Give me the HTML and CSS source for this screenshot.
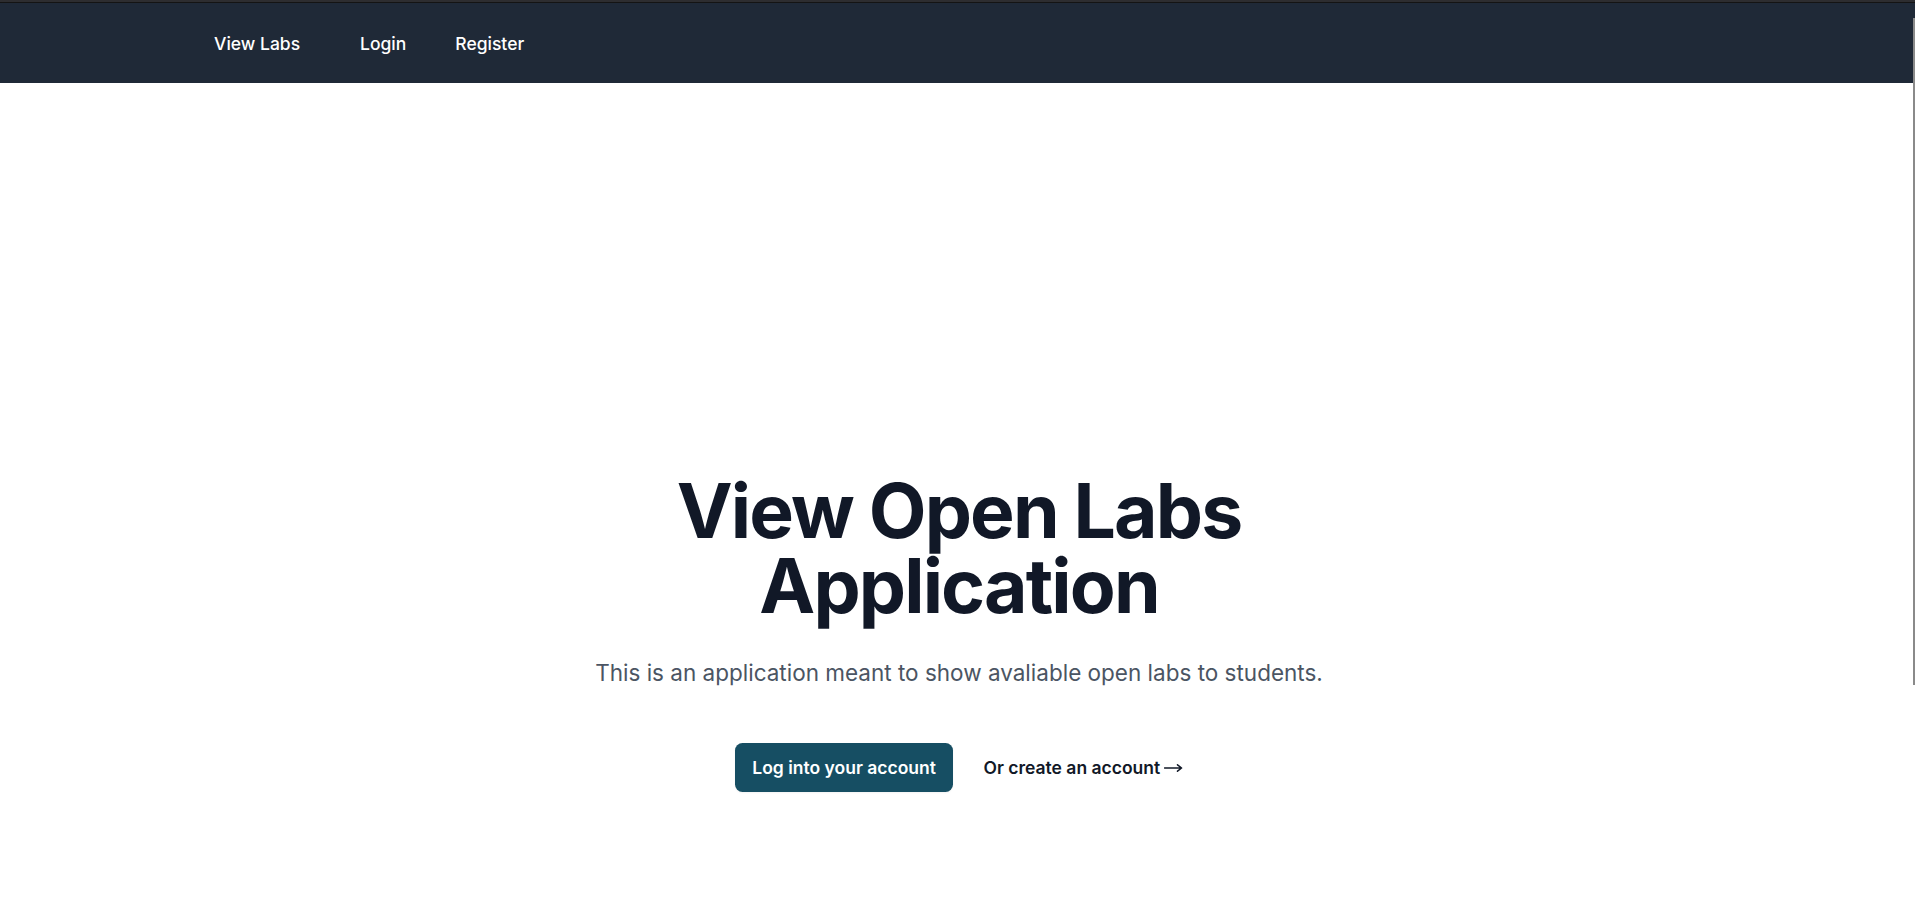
FILE: index.html
```html
<!DOCTYPE html>
<html lang="en">
<head>
<meta charset="utf-8">
<title>View Open Labs Application</title>
<link rel="stylesheet" href="styles.css">
</head>
<body>
<div class="top-strip"></div>
<header class="site-nav">
  <nav class="nav-inner">
    <a class="nav-link nav-link-first" href="#">View Labs</a>
    <a class="nav-link" href="#">Login</a>
    <a class="nav-link" href="#">Register</a>
  </nav>
</header>
<main class="hero">
  <div class="hero-inner">
    <h1 class="hero-title">View Open Labs Application</h1>
    <p class="hero-text">This is an application meant to show avaliable open labs to students.</p>
    <div class="hero-actions">
      <a class="btn-primary" href="#">Log into your account</a>
      <a class="btn-link" href="#">Or create an account<svg class="arrow" width="19" height="10" viewBox="0 0 19 10" aria-hidden="true"><path d="M0.5 5H17.5M13.5 1.8L17.6 5L13.5 8.2" fill="none" stroke="#111827" stroke-width="1.5" stroke-linecap="round" stroke-linejoin="round"/></svg></a>
    </div>
  </div>
</main>
<div class="scroll-thumb"></div>
</body>
</html>
```

FILE: styles.css
```css
html, body {
  margin: 0;
  padding: 0;
  background: #ffffff;
}

body {
  font-family: Inter, "Noto Sans", "Liberation Sans", sans-serif;
  -webkit-font-smoothing: antialiased;
  min-height: 915px;
}

a {
  text-decoration: none;
}

.top-strip {
  height: 2px;
  background: #2d2d30;
  border-bottom: 1px solid #141414;
}

.site-nav {
  background: #1f2937;
  height: 80px;
}

.nav-inner {
  height: 100%;
  display: flex;
  align-items: center;
  padding-left: 214px;
  gap: 49px;
}

.nav-link {
  color: #ffffff;
  font-size: 17.5px;
  font-weight: 500;
  line-height: 25px;
}

.nav-link-first {
  margin-right: 11px;
}

.hero {
  display: flex;
  justify-content: center;
  padding: 390px 0 0 3px;
}

.hero-inner {
  max-width: 840px;
  text-align: center;
}

.hero-title {
  margin: 0;
  font-size: 75px;
  line-height: 75px;
  font-weight: 700;
  letter-spacing: -1.875px;
  color: #111827;
}

.hero-text {
  margin: 30px 0 0;
  font-size: 22.5px;
  line-height: 40px;
  color: #4b5563;
}

.hero-actions {
  margin-top: 50px;
  display: flex;
  justify-content: center;
  align-items: center;
  gap: 30px;
}

.btn-primary {
  background: #164e63;
  color: #ffffff;
  border-radius: 7.5px;
  padding: 12.5px 17.5px;
  font-size: 17.5px;
  line-height: 24px;
  font-weight: 600;
  box-shadow: 0 1px 2px rgba(0, 0, 0, 0.05);
}

.btn-link {
  display: inline-flex;
  align-items: center;
  gap: 4px;
  color: #111827;
  font-size: 17.5px;
  line-height: 25px;
  font-weight: 600;
}

.arrow {
  display: block;
  margin-top: 1px;
}

.scroll-thumb {
  position: fixed;
  right: 0;
  top: 18px;
  width: 2px;
  height: 667px;
  background: #8a8a8a;
}
```
